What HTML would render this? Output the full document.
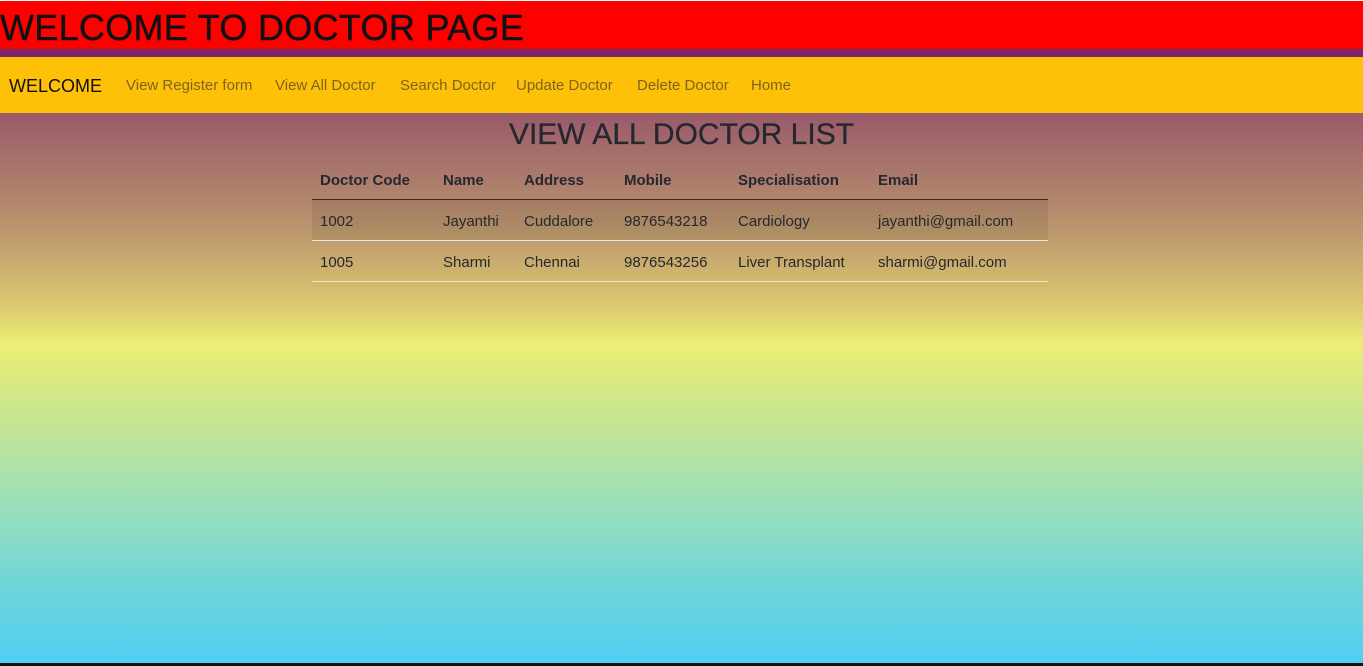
<!DOCTYPE html>
<html><head><style>
*{margin:0;padding:0;box-sizing:border-box}
body{width:1363px;height:666px;position:relative;overflow:hidden;font-family:"Liberation Sans",sans-serif;background:#fff}
.h1{position:absolute;left:0;top:1px;width:1363px;height:48px;background:#ff0000;color:#111;font-size:36px;line-height:54px;white-space:nowrap;letter-spacing:0.3px;-webkit-text-stroke:0.4px #111}
.pur{position:absolute;left:0;top:49px;width:1363px;height:8px;background:#7d2568}
.nav{position:absolute;left:0;top:57px;width:1363px;height:56px;background:#ffc107}
.nav span{position:absolute;top:0;line-height:58px;font-size:15px;color:#7a6520;white-space:nowrap}
.nav .b{font-size:18px;color:#111}
.bg{position:absolute;left:0;top:113px;width:1363px;height:550px;background:linear-gradient(#9a5a6a 0%,#b48c6c 18%,#dcc870 35%,#ecee74 42%,#c9e68e 55%,#98dfbc 72%,#6fd5d8 86%,#50cff2 100%)}
.bot{position:absolute;left:0;top:663px;width:1363px;height:3px;background:#111}
h2{position:absolute;left:0;width:1363px;top:114px;text-align:center;font-weight:normal;font-size:30px;line-height:42px;color:#25282f;-webkit-text-stroke:0.3px #25282f}
.t{position:absolute;font-size:15px;color:#25282f;white-space:nowrap}
.th{font-weight:bold}
.line{position:absolute;left:312px;width:736px}
</style></head><body>
<div class="h1">WELCOME TO DOCTOR PAGE</div>
<div class="pur"></div>
<div class="nav">
<span class="b" style="left:9px">WELCOME</span>
<span style="left:126px">View Register form</span>
<span style="left:275px">View All Doctor</span>
<span style="left:400px">Search Doctor</span>
<span style="left:516px">Update Doctor</span>
<span style="left:637px">Delete Doctor</span>
<span style="left:751px">Home</span>
</div>
<div class="bg"></div>
<div class="bot"></div>
<h2>VIEW ALL DOCTOR LIST</h2>
<div class="line" style="top:200px;height:40px;background:rgba(0,0,0,0.07)"></div>
<div class="line" style="top:199px;height:1px;background:#3a2a25"></div>
<div class="line" style="top:240px;height:1px;background:#e8e8e8"></div>
<div class="line" style="top:281px;height:1px;background:#eee8c0"></div>
<div class="t th" style="left:320px;top:172px">Doctor Code</div>
<div class="t th" style="left:443px;top:172px">Name</div>
<div class="t th" style="left:524px;top:172px">Address</div>
<div class="t th" style="left:624px;top:172px">Mobile</div>
<div class="t th" style="left:738px;top:172px">Specialisation</div>
<div class="t th" style="left:878px;top:172px">Email</div>
<div class="t" style="left:320px;top:213px">1002</div>
<div class="t" style="left:443px;top:213px">Jayanthi</div>
<div class="t" style="left:524px;top:213px">Cuddalore</div>
<div class="t" style="left:624px;top:213px">9876543218</div>
<div class="t" style="left:738px;top:213px">Cardiology</div>
<div class="t" style="left:878px;top:213px">jayanthi@gmail.com</div>
<div class="t" style="left:320px;top:254px">1005</div>
<div class="t" style="left:443px;top:254px">Sharmi</div>
<div class="t" style="left:524px;top:254px">Chennai</div>
<div class="t" style="left:624px;top:254px">9876543256</div>
<div class="t" style="left:738px;top:254px">Liver Transplant</div>
<div class="t" style="left:878px;top:254px">sharmi@gmail.com</div>
</body></html>
